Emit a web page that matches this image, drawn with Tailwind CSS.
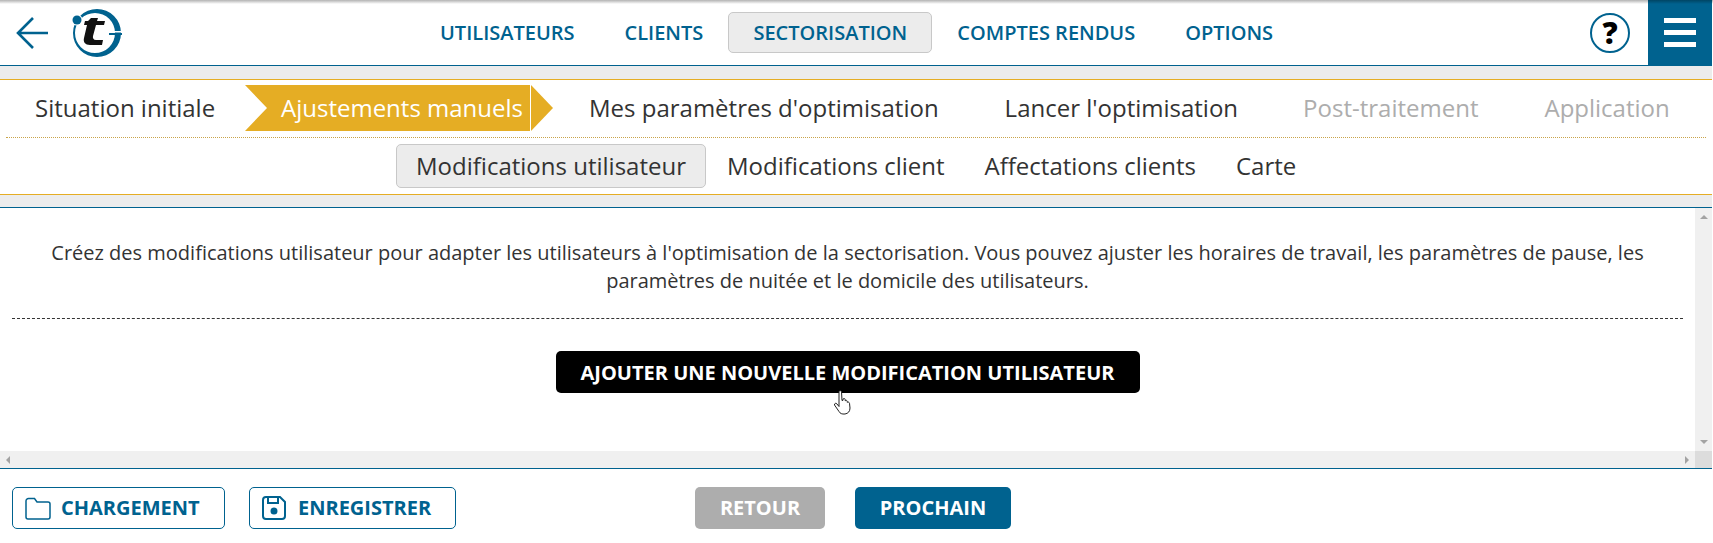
<!DOCTYPE html>
<html lang="fr">
<head>
  <meta charset="UTF-8" />
  <title>Sectorisation</title>
  <script src="https://cdn.jsdelivr.net/npm/@tailwindcss/browser@4"></script>
</head>
<body class="bg-white font-['Open_Sans',sans-serif] text-[#333] overflow-hidden">
<div class="relative w-[1712px] h-[543px] flex flex-col">

  <!-- Top shadow -->
  <div class="absolute top-0 left-0 w-[1713px] h-[4px] bg-gradient-to-b from-black/30 to-transparent z-10"></div>

  <!-- Header -->
  <header class="h-[66px] shrink-0 border-b border-[#00628f] flex items-stretch relative">
    <div class="w-[400px] flex items-center">
      <svg class="ml-[16px] mt-[1px]" width="33" height="32" viewBox="0 0 33 32" fill="none" stroke="#00628f" stroke-width="2.6"><path d="M32 16H2M17 1 2 16l15 15"/></svg>
      <svg class="ml-[23px] mt-[1px]" width="50" height="50" viewBox="0 0 50 50">
        <path fill-rule="evenodd" fill="#00628f" d="M25 1a24 24 0 1 1 0 48a24 24 0 1 1 0-48zM23 5a20 20 0 1 0 0 40a20 20 0 1 0 0-40z"/>
        <rect x="37" y="23" width="14" height="1.500" fill="#fff"/>
        <rect x="37" y="25" width="13" height="2" fill="#00628f"/>
        <circle cx="5" cy="12" r="5.500" fill="#fff"/>
        <circle cx="5" cy="12" r="4.500" fill="#00628f"/>
        <path d="M19 10h7l-1 3h8l-1 4h-8l-3 11c-.5 2 .5 4 3 4h7l-1 5H18c-5 0-7-3-6-7l3-13h-3l1-4h3z" fill="#111"/>
      </svg>
    </div>
    <nav class="absolute left-[417px] top-[12px] flex items-center h-[41px] text-[20px] font-semibold text-[#00628f] whitespace-nowrap">
      <a class="px-[23px]">UTILISATEURS</a>
      <a class="px-[27px]">CLIENTS</a>
      <a class="ml-[-2px] h-[41px] w-[204px] flex items-center justify-center bg-[#ececec] border border-[#c8c8c8] rounded-[5px]">SECTORISATION</a>
      <a class="ml-[25px]">COMPTES RENDUS</a>
      <a class="ml-[50px]">OPTIONS</a>
    </nav>
    <div class="ml-auto flex items-stretch">
      <div class="w-[40px] h-[40px] mt-[13px] mr-[18px] rounded-full border-[2.5px] border-[#00628f] flex items-center justify-center text-[30px] font-extrabold text-black leading-none">?</div>
      <div class="w-[64px] bg-[#00628f] flex flex-col items-center justify-center gap-[7px]">
        <span class="block w-[32px] h-[5px] bg-white"></span>
        <span class="block w-[32px] h-[5px] bg-white"></span>
        <span class="block w-[32px] h-[5px] bg-white"></span>
      </div>
    </div>
  </header>

  <div class="h-[13px] shrink-0 bg-[#ececec]"></div>

  <!-- Steps -->
  <div class="h-[116px] shrink-0 border-y border-[#e5ad24] flex flex-col">
    <div class="mx-[6px] h-[58px] border-b border-dotted border-[#c9a44a] relative shrink-0">
      <div class="flex items-center h-[54px] pt-[2px] text-[24px] whitespace-nowrap absolute left-0 top-0">
        <span class="ml-[29px] w-[210px]">Situation initiale</span>
        <div class="flex items-stretch h-[46px] text-white">
          <div class="w-[285px] bg-[#e5ad24] flex items-center pl-[36px] [clip-path:polygon(0_0,100%_0,100%_100%,0_100%,22px_50%)]">Ajustements manuels</div>
          <div class="w-[22px] ml-[1px] bg-[#e5ad24] [clip-path:polygon(0_0,100%_50%,0_100%)]"></div>
        </div>
        <span class="ml-[36px] text-[#333]">Mes paramètres d'optimisation</span>
        <span class="ml-[66px] text-[#333]">Lancer l'optimisation</span>
        <span class="ml-[65px] text-[#adadad]">Post-traitement</span>
        <span class="ml-[66px] text-[#adadad]">Application</span>
      </div>
    </div>
    <div class="flex-1 flex items-center pl-[396px] pb-[1px] text-[24px] whitespace-nowrap">
      <span class="h-[44px] w-[310px] flex items-center justify-center bg-[#ececec] border border-[#c8c8c8] rounded-[5px]">Modifications utilisateur</span>
      <span class="ml-[21px]">Modifications client</span>
      <span class="ml-[40px]">Affectations clients</span>
      <span class="ml-[40px]">Carte</span>
    </div>
  </div>

  <div class="h-[12px] shrink-0 bg-[#ececec]"></div>

  <!-- Content -->
  <main class="h-[262px] shrink-0 border-y border-[#00628f] relative">
    <div class="h-[243px] pr-[17px]">
      <p class="px-[40px] pt-[31px] text-center text-[20px] leading-[28px] text-[#333]">Créez des modifications utilisateur pour adapter les utilisateurs à l'optimisation de la sectorisation. Vous pouvez ajuster les horaires de travail, les paramètres de pause, les paramètres de nuitée et le domicile des utilisateurs.</p>
      <div class="mx-[12px] mt-[23px] border-t border-dashed border-[#333]"></div>
      <div class="flex justify-center mt-[32px]">
        <button class="h-[42px] w-[584px] pt-[1px] bg-black text-white rounded-[5px] text-[20px] font-bold">AJOUTER UNE NOUVELLE MODIFICATION UTILISATEUR</button>
      </div>
    </div>
    <!-- Scrollbars -->
    <div class="absolute right-0 top-0 bottom-0 w-[17px] bg-[#f0f0f0] flex flex-col items-center justify-between pt-[7px] pb-[24px]">
      <span class="border-x-[4px] border-x-transparent border-b-[4px] border-b-[#a3a3a3]"></span>
      <span class="border-x-[4px] border-x-transparent border-t-[4px] border-t-[#a3a3a3]"></span>
    </div>
    <div class="absolute left-0 right-0 bottom-0 h-[17px] bg-[#f0f0f0] flex items-center justify-between pl-[6px] pr-[23px]">
      <span class="border-y-[4px] border-y-transparent border-r-[4px] border-r-[#a3a3a3]"></span>
      <span class="border-y-[4px] border-y-transparent border-l-[4px] border-l-[#a3a3a3]"></span>
    </div>
    <div class="absolute right-0 bottom-0 w-[17px] h-[17px] bg-[#dcdcdc]"></div>
  </main>

  <!-- Footer -->
  <footer class="flex-1 flex items-start pt-[18px] pl-[12px] text-[20px] font-bold whitespace-nowrap relative">
    <button class="h-[42px] w-[213px] border border-[#00628f] rounded-[5px] text-[#00628f] flex items-center pl-[12px] gap-[10px]">
      <svg width="26" height="23" viewBox="0 0 26 23" fill="none" stroke="#00628f" stroke-width="1.500"><path d="M1 4a2.500 2.500 0 0 1 2.500-2.500h6L12 5h11a2 2 0 0 1 2 2v13a2 2 0 0 1-2 2H3a2 2 0 0 1-2-2z"/></svg>
      CHARGEMENT
    </button>
    <button class="ml-[24px] h-[42px] w-[207px] border border-[#00628f] rounded-[5px] text-[#00628f] flex items-center pl-[12px] gap-[12px]">
      <svg width="24" height="24" viewBox="0 0 24 24" fill="none" stroke="#00628f" stroke-width="2"><path d="M1 4a3 3 0 0 1 3-3h14l5 5v14a3 3 0 0 1-3 3H4a3 3 0 0 1-3-3z"/><path d="M6 1v6h10V1"/><circle cx="12" cy="15" r="2.500" fill="#00628f"/></svg>
      ENREGISTRER
    </button>
    <button class="ml-[239px] h-[42px] w-[130px] bg-[#adadad] rounded-[5px] text-white">RETOUR</button>
    <button class="ml-[30px] h-[42px] w-[156px] bg-[#00628f] rounded-[5px] text-white">PROCHAIN</button>
  </footer>

  <!-- Mouse cursor -->
  <svg class="absolute left-[833px] top-[390px] z-20" width="19" height="25" viewBox="0 0 19 25" fill="#fff" stroke="#222" stroke-width="1"><path d="M6 1.500c.5-1 2-1 2.500 0l.5 9 1-.2V9c1-.8 2-.5 2.200.5v1.300c1-.8 1.800-.5 2 .5v1c1-.6 2-.2 2.300 1l.5 4.700c0 3.500-2 5.500-5 6-3 .3-5-.5-6-2.500L1.500 15c-.5-1.500 1.500-2.500 2.500-1l2 2.500z"/></svg>
</div>
</body>
</html>
